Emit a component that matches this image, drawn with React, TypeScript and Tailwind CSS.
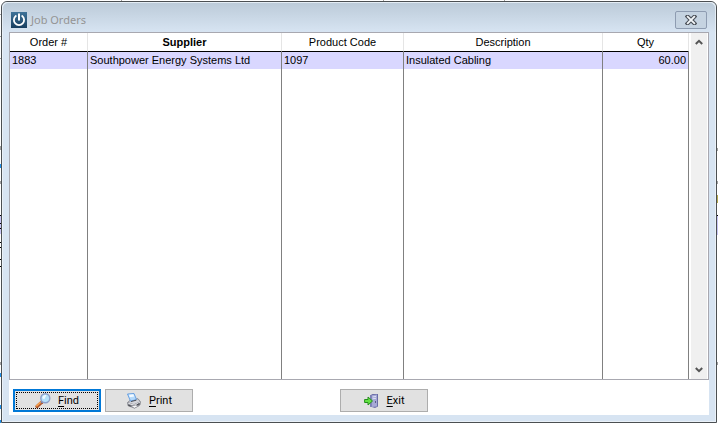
import { ReactNode, useState } from "react";

interface IOrder {
  id: string;
  supplier: string;
  productCode: string;
  description: string;
  qty: number;
}

const orders: IOrder[] = [
  {
    id: "1883",
    supplier: "Southpower Energy Systems Ltd",
    productCode: "1097",
    description: "Insulated Cabling",
    qty: 60,
  },
];

function PowerIcon() {
  return (
    <svg width="16" height="16" viewBox="0 0 16 16" aria-hidden="true">
      <defs>
        <linearGradient id="power" x1="0" y1="0" x2="0" y2="1">
          <stop offset="0" stopColor="#3f7399" />
          <stop offset="1" stopColor="#173e60" />
        </linearGradient>
      </defs>
      <rect width="16" height="16" fill="url(#power)" />
      <path
        d="M4.8 4a5.100 5.100 0 1 0 6.400 0"
        fill="none"
        stroke="#fff"
        strokeWidth="1.8"
        strokeLinecap="round"
      />
      <path d="M8 2.200v5.600" stroke="#fff" strokeWidth="2" strokeLinecap="round" />
    </svg>
  );
}

function CloseIcon() {
  return (
    <svg width="12" height="10" viewBox="0 0 12 10" aria-hidden="true">
      <path d="M2.500 1.500l7 7M9.500 1.500l-7 7" stroke="#4a5058" strokeWidth="4" strokeLinecap="square" />
      <path d="M2.800 1.800l6.400 6.400M9.200 1.800L2.800 8.200" stroke="#f4f7fa" strokeWidth="1.900" strokeLinecap="square" />
    </svg>
  );
}

function FindIcon() {
  return (
    <svg width="16" height="16" viewBox="0 0 16 16" aria-hidden="true">
      <path d="M2 13.500l5-4.500" stroke="#b0562c" strokeWidth="3.200" strokeLinecap="round" />
      <path d="M1.700 12.800l4.300-4" stroke="#f5a04f" strokeWidth="1.600" strokeLinecap="round" />
      <path d="M6 9.700l1.500-1.500" stroke="#77799a" strokeWidth="2" />
      <circle cx="10.300" cy="5.300" r="4.500" fill="#b5e2fa" stroke="#8c9fca" strokeWidth="1.400" />
      <path d="M7.300 5.300a3 3 0 0 1 4-3l-2 4z" fill="#f2fbff" />
    </svg>
  );
}

function PrintIcon() {
  return (
    <svg width="16" height="16" viewBox="0 0 16 16" aria-hidden="true">
      <path d="M1.500 9.500L5 6.500l7-.8 2.500 3.100-.5 3.200-5.500 3-6.500-2.200z" fill="#8f9199" stroke="#74767e" strokeWidth=".6" />
      <path d="M2.500 9.200L5.500 7l6.300-.8 2 2.400-5.800 2.600z" fill="#d3d4da" />
      <path d="M1.500 1L8 .5l2.500 6-6 1.700z" fill="#b4d9fb" stroke="#5f9ae0" strokeWidth=".9" />
      <path d="M3 1.700l4.300-.4 1 2.200-4.500.7z" fill="#f3faff" />
      <path d="M5 8.500l5.300-1.300" stroke="#4b4d54" strokeWidth="1" />
      <path d="M2.300 10.300L8 12.200l5.800-2.700" fill="none" stroke="#ececf0" strokeWidth="1" />
      <path d="M5 13.300l4.500-1.300 3 1-4 2.200z" fill="#f7f7f9" stroke="#74767e" strokeWidth=".6" />
      <path d="M2.300 12l2.500 1.200M11 11.800l2.500-1.200" stroke="#4b4d54" strokeWidth="1.200" />
    </svg>
  );
}

function ExitIcon() {
  return (
    <svg width="16" height="16" viewBox="0 0 16 16" aria-hidden="true">
      <path d="M6 2.500L8.500 1H14v12.500L11 15l-5-1.500z" fill="#6a6ca6" />
      <path d="M7.500 2.300l5.500-.8v12L7.500 14z" fill="#a6a9d6" />
      <path d="M6 2.500l1.500-.2V14L6 13.500z" fill="#7c80b6" />
      <path d="M8.500 4l3.500-.6M8.500 5.800l3.500-.5" stroke="#e4e6f7" strokeWidth=".9" />
      <path d="M11.500 8v2" stroke="#5c5e8a" strokeWidth="1" />
      <path
        d="M.6 6.500h3.400V4L8.500 8 4 12V9.500H.6z"
        fill="#63e342"
        stroke="#268f1c"
        strokeWidth="1"
      />
    </svg>
  );
}

interface IActionButton {
  icon: ReactNode;
  label: string;
  focused?: boolean;
}

function ActionButton({ icon, label, focused }: IActionButton) {
  return (
    <button
      type="button"
      className={
        focused
          ? "h-[23px] w-[88px] border-2 border-[#0078d7] bg-[#e1e1e1] p-px"
          : "h-[23px] w-[88px] border border-[#adadad] bg-[#e1e1e1] p-[2px]"
      }
    >
      <span
        className={
          focused
            ? "flex h-full items-center justify-center gap-[7px] border border-dotted border-black"
            : "flex h-full items-center justify-center gap-[7px]"
        }
      >
        {icon}
        <span>
          <u className="underline-offset-2">{label[0]}</u>
          {label.slice(1)}
        </span>
      </span>
    </button>
  );
}

function ScrollBar() {
  return (
    <div className="flex w-[19px] flex-col justify-between border-r border-l-2 border-white bg-[#f0f0f0]">
      <button type="button" aria-label="Scroll up" className="flex h-[18px] items-center justify-center">
        <svg width="8" height="6" viewBox="0 0 8 6" aria-hidden="true">
          <path d="M.8 5L4 1.800 7.200 5" fill="none" stroke="#555" strokeWidth="2" />
        </svg>
      </button>
      <button type="button" aria-label="Scroll down" className="flex h-[18px] items-center justify-center">
        <svg width="8" height="6" viewBox="0 0 8 6" aria-hidden="true">
          <path d="M.8 1L4 4.200 7.200 1" fill="none" stroke="#555" strokeWidth="2" />
        </svg>
      </button>
    </div>
  );
}

function OrdersTable() {
  const [selected, setSelected] = useState(orders[0].id);

  return (
    <table className="min-w-0 flex-1 table-fixed border-separate border-spacing-0 text-[11px] leading-4">
      <colgroup>
        <col className="w-[78px]" />
        <col className="w-[194px]" />
        <col className="w-[122px]" />
        <col />
        <col className="w-[86px]" />
      </colgroup>
      <thead>
        <tr className="h-[19px] *:border-r *:border-b *:border-r-[#e5e5e5] *:border-b-black *:p-0">
          <th className="font-normal">Order #</th>
          <th className="font-bold">Supplier</th>
          <th className="font-normal">Product Code</th>
          <th className="font-normal">Description</th>
          <th className="font-normal">Qty</th>
        </tr>
      </thead>
      <tbody>
        {orders.map((order) => (
          <tr
            key={order.id}
            onClick={() => setSelected(order.id)}
            className={
              order.id === selected
                ? "h-[17px] bg-[#d9d7ff] *:border-r *:border-[#808080] *:px-[2px] *:py-0 *:align-top"
                : "h-[17px] *:border-r *:border-[#808080] *:px-[2px] *:py-0 *:align-top"
            }
          >
            <td>{order.id}</td>
            <td>{order.supplier}</td>
            <td>{order.productCode}</td>
            <td>{order.description}</td>
            <td className="text-right">{order.qty.toFixed(2)}</td>
          </tr>
        ))}
        <tr className="*:border-r *:border-[#808080] *:p-0">
          <td />
          <td />
          <td />
          <td />
          <td />
        </tr>
      </tbody>
    </table>
  );
}

// Edges of the parent form that show around the dialog
const edges = [
  "top-0 left-[121px] h-px w-px bg-[#a0a0a0]",
  "top-0 left-[383px] h-px w-px bg-[#a0a0a0]",
  "top-0 left-[504px] h-px w-px bg-[#a0a0a0]",
  "top-[14px] left-0 h-px w-px bg-[#a0a0a0]",
  "top-[36px] left-0 h-px w-px bg-[#a0a0a0]",
  "top-[58px] left-0 h-px w-px bg-[#a0a0a0]",
  "top-[146px] left-0 h-1 w-px bg-[#a0a0a0]",
  "top-[164px] left-0 h-1 w-px bg-[#1e8fe8]",
  "top-[181px] left-0 h-[3px] w-px bg-[#a0a0a0]",
  "top-[215px] left-0 h-px w-px bg-black",
  "top-[216px] left-0 h-[18px] w-px bg-[#c9c6f5]",
  "top-[223px] left-0 h-px w-px bg-black",
  "top-[228px] left-0 h-px w-px bg-black",
  "top-[242px] left-0 h-px w-px bg-black",
  "top-[247px] left-0 h-px w-px bg-black",
  "top-[259px] left-0 h-px w-px bg-black",
  "top-[266px] left-0 h-px w-px bg-black",
  "top-[362px] left-0 h-[3px] w-px bg-[#a0a0a0]",
  "top-[373px] left-0 h-1 w-px bg-[#1e8fe8]",
  "top-[405px] left-0 h-1 w-px bg-[#1e8fe8]",
  "top-[420px] left-0 h-[3px] w-px bg-[#1e8fe8]",
  "top-[148px] right-0 h-[3px] w-px bg-[#a0a0a0]",
  "top-[181px] right-0 h-[3px] w-px bg-[#a0a0a0]",
  "top-[195px] right-0 h-2 w-px bg-[#b5a94e]",
  "top-[215px] right-0 h-px w-px bg-black",
  "top-[216px] right-0 h-[19px] w-px bg-[#c9c6f5]",
  "top-[362px] right-0 h-[3px] w-px bg-[#a0a0a0]",
];

function App() {
  return (
    <div className="relative flex min-h-screen flex-col bg-white px-px pt-px font-['Liberation_Sans',Arial,sans-serif] text-black">
      {edges.map((edge) => (
        <span key={edge} className={`absolute ${edge}`} />
      ))}
      <main className="flex flex-1 flex-col rounded-t-md border border-[#4b4f52] bg-[#d7e4f2] px-[7px] pb-[7px] inset-shadow-[0_0_0_1px_#eaf1f8]">
        <header className="-mx-[7px] flex h-[30px] items-center rounded-t-md border-x border-t border-[#e4edf5] bg-linear-to-b from-[#bccbd9] to-[#d7e4f2] px-2 pt-[5px]">
          <PowerIcon />
          <h1 className="ml-1 flex-1 font-['Noto_Sans',sans-serif] text-[11px] leading-4 text-[#949494]">
            Job Orders
          </h1>
          <button
            type="button"
            aria-label="Close"
            className="flex h-[18px] w-8 items-center justify-center rounded-xs border border-[#8e9cb1] bg-[#c5d3e1]"
          >
            <CloseIcon />
          </button>
        </header>
        <div className="flex flex-1 flex-col bg-white">
          <section className="flex flex-1 border border-[#a8a8b0]">
            <OrdersTable />
            <ScrollBar />
          </section>
          <footer className="flex px-1 pt-[9px] pb-[3px] font-[Roboto,sans-serif] text-[11px] leading-4">
            <div className="flex flex-1 gap-1">
              <ActionButton icon={<FindIcon />} label="Find" focused />
              <ActionButton icon={<PrintIcon />} label="Print" />
            </div>
            <ActionButton icon={<ExitIcon />} label="Exit" />
            <div className="w-[277px]" />
          </footer>
        </div>
      </main>
    </div>
  );
}

export default App;
